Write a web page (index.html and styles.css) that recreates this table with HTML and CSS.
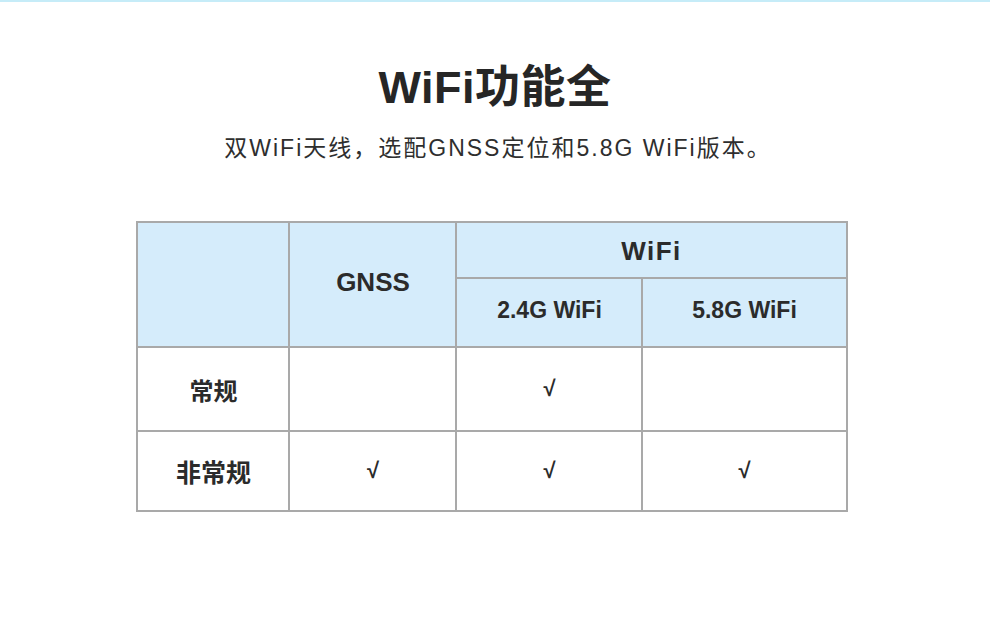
FILE: index.html
```html
<!DOCTYPE html>
<html lang="zh-CN">
<head>
<meta charset="utf-8">
<title>WiFi功能全</title>
<link rel="stylesheet" href="styles.css">
</head>
<body>
<div class="topline"></div>
<section class="page">
  <h1 class="title">WiFi功能全</h1>
  <p class="subtitle">双WiFi天线，选配GNSS定位和5.8G WiFi版本。</p>
  <div class="table-wrap">
    <table class="spec">
      <colgroup>
        <col class="c1"><col class="c2"><col class="c3"><col class="c4">
      </colgroup>
      <thead>
        <tr class="h1row">
          <th rowspan="2"></th>
          <th rowspan="2" class="gnss">GNSS</th>
          <th colspan="2" class="wide">WiFi</th>
        </tr>
        <tr class="h2row">
          <th class="sub">2.4G WiFi</th>
          <th class="sub">5.8G WiFi</th>
        </tr>
      </thead>
      <tbody>
        <tr class="r1">
          <td class="label">常规</td>
          <td></td>
          <td class="check">√</td>
          <td></td>
        </tr>
        <tr class="r2">
          <td class="label">非常规</td>
          <td class="check">√</td>
          <td class="check">√</td>
          <td class="check">√</td>
        </tr>
      </tbody>
    </table>
  </div>
</section>
</body>
</html>
```

FILE: styles.css
```css
html, body {
  margin: 0;
  padding: 0;
  background: #ffffff;
}
body {
  font-family: "Liberation Sans", "Noto Sans CJK SC", sans-serif;
  color: #2b2b2b;
  width: 990px;
  height: 629px;
  overflow: hidden;
}
.topline {
  height: 2px;
  background: #c6ecf8;
}
.page {
  display: flex;
  flex-direction: column;
  align-items: center;
  padding-top: 60px;
}
.title {
  margin: 0;
  font-size: 45px;
  line-height: 52px;
  font-weight: 700;
  color: #262626;
  letter-spacing: 0.5px;
}
.subtitle {
  margin: 19px 0 0;
  font-size: 23px;
  line-height: 30px;
  color: #2e2e2e;
  letter-spacing: 2px;
  padding-left: 6px;
}
.table-wrap {
  margin-top: 58px;
  padding-right: 6px;
}
.spec {
  width: 709px;
  table-layout: fixed;
  border-collapse: collapse;
  border: 2px solid #a9a9a9;
}
.c1 { width: 152px; }
.c2 { width: 167px; }
.c3 { width: 186px; }
.c4 { width: 204px; }
.spec th, .spec td {
  border: 2px solid #a9a9a9;
  padding: 0;
  text-align: center;
  vertical-align: middle;
}
.spec th {
  background: #d5ecfb;
  font-size: 26px;
  font-weight: 700;
  color: #2b2b2b;
}
.spec th.gnss {
  padding-bottom: 4px;
}
.h1row { height: 56px; }
.h2row { height: 69px; }
.spec th.wide {
  letter-spacing: 1.5px;
  padding-top: 3px;
}
.spec th.sub {
  font-size: 23px;
  padding-bottom: 4px;
}
.r1 { height: 84px; }
.r2 { height: 80px; }
.label {
  font-size: 24px;
  font-weight: 700;
  color: #2b2b2b;
  padding-bottom: 4px;
}
.r2 .label {
  font-size: 25px;
}
.check {
  font-size: 22px;
  font-weight: 700;
  color: #2b2b2b;
  padding-top: 3px;
}
```
